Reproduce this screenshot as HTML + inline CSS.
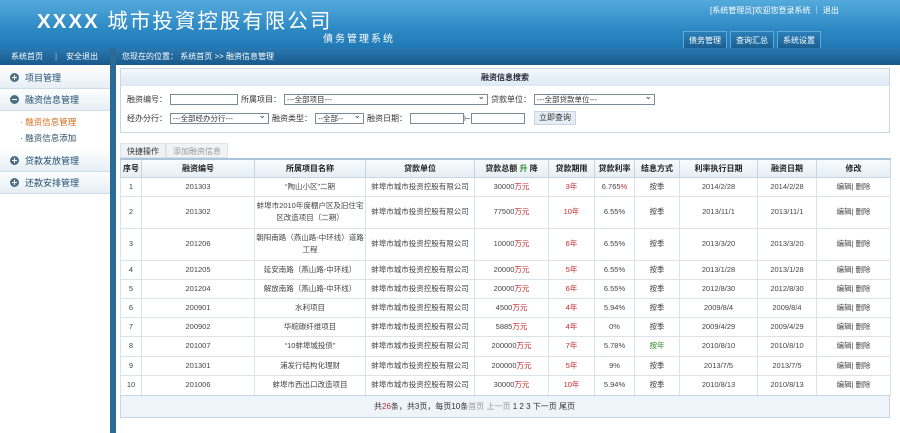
<!DOCTYPE html>
<html><head><meta charset="utf-8"><style>
*{margin:0;padding:0;box-sizing:border-box}
body{width:900px;height:433px;overflow:hidden;background:#fff;font-family:"Liberation Sans","Noto Sans CJK SC",sans-serif;font-size:8px;color:#333;position:relative}
.hd{position:absolute;left:0;top:0;width:900px;height:48px;background:linear-gradient(#55aadb,#2d89c4 60%,#2079b5)}
.title{position:absolute;left:37px;top:4px;color:#fff;font-size:20.5px;letter-spacing:2px}
.sub{position:absolute;left:323px;top:30px;color:#fff;font-size:10px;letter-spacing:2px}
.tr{position:absolute;left:710px;top:5px;color:#fff;font-size:8px}
.btns{position:absolute;left:683px;top:31px;display:flex;gap:3px}
.btns span{display:block;height:17px;line-height:17px;padding:0 5px;color:#fff;font-size:8px;background:linear-gradient(#2b7fb8,#1a5f92);border:1px solid #5fa8d8;border-bottom:none}
.nav{position:absolute;left:0;top:48px;width:900px;height:17px;background:linear-gradient(#2a78b0,#185a8c)}
.nav .l{position:absolute;left:0;top:0;width:110px;height:17px;color:#fff;font-size:8px;line-height:17px}
.nav .r{position:absolute;left:122px;top:0;line-height:17px;color:#fff;font-size:8px}
.side{position:absolute;left:0;top:67px;width:110px;height:366px;background:#fff}
.bar{position:absolute;left:110px;top:48px;width:6px;height:385px;background:#2a6a95}
.si{height:22px;line-height:22px;padding-left:25px;font-size:9px;color:#1f4a6e;background:linear-gradient(#fdfefe,#e6eff5);border-bottom:1px solid #cfdde8;position:relative}
.si:before{content:"";position:absolute;left:10px;top:6px;width:9px;height:9px;border-radius:50%;background:#4d6e87}
.si i{position:absolute;left:12px;top:10px;width:5px;height:1px;background:#fff}
.si b{position:absolute;left:14px;top:8px;width:1px;height:5px;background:#fff}
.sub2{height:16px;line-height:16px;padding-left:20px;font-size:8.5px;color:#2a4d6a}
.panel{position:absolute;left:120px;top:68px;width:770px;height:65px;border:1px solid #c5d6e4}
.pt{height:17px;background:linear-gradient(#f3f8fc,#dde9f3);text-align:center;line-height:17px;font-weight:bold;font-size:8px;color:#223}
.row{position:absolute;left:6px;font-size:8px;color:#333;display:flex;align-items:center;gap:3px;height:14px}
.in{border:1px solid #7a8a99;height:11px;background:#fff;font-size:7.5px;line-height:9px;padding-left:2px;position:relative}
.sel:after{content:"⌄";position:absolute;right:2px;top:-3px;font-size:9px}
.tabs{position:absolute;left:120px;top:143px;height:15px;display:flex}
.tabs span{display:block;padding:0 6px;line-height:15px;background:#eef2f5;border:1px solid #dde3e8;font-size:8px;color:#333}
.tabs span+span{color:#999;background:#f1f3f5}
table{position:absolute;left:120px;top:158px;width:770px;border-collapse:collapse;font-size:7.5px;text-align:center;table-layout:fixed}
th{height:18px;background:linear-gradient(#f8fbfd,#e5eef5);border:1px solid #c7d6e3;font-size:8px;color:#222;border-top:2px solid #aac4da}
td{border:1px solid #d8e3ec;color:#444;line-height:12px}
.red{color:#c0262c}.g{color:#2a8a2a}
.ft{position:absolute;left:120px;top:395px;width:770px;height:23px;background:#eef4fa;border:1px solid #c5d6e4;font-size:8px;line-height:22px;padding-left:253px;color:#333}
</style></head><body>
<div class="hd">
<div class="title"><b>XXXX</b> 城市投資控股有限公司</div>
<div class="sub">債务管理系统</div>
<div class="tr">[系统管理员]欢迎您登录系统 ｜ 退出</div>
<div class="btns"><span>债务管理</span><span>查询汇总</span><span>系统设置</span></div>
</div>
<div class="nav"><div class="l"><span style="position:absolute;left:11px">系统首页</span><span style="position:absolute;left:55px;opacity:.6">|</span><span style="position:absolute;left:66px">安全退出</span></div>
<div class="r">您现在的位置： 系统首页 &gt;&gt; 融资信息管理</div></div>
<div class="side">
<div class="si"><i></i><b></b>项目管理</div>
<div class="si"><i></i>融资信息管理</div>
<div class="sub2" style="color:#d56a1c;margin-top:3px">· 融资信息管理</div>
<div class="sub2">· 融资信息添加</div>
<div class="si" style="margin-top:4px"><i></i><b></b>贷款发放管理</div>
<div class="si"><i></i><b></b>还款安排管理</div>
</div>
<div class="bar"></div>
<div class="panel"><div class="pt">融资信息搜索</div>
<div class="row" style="top:23px">融资编号：<span class="in" style="width:68px"></span>所属项目：<span class="in sel" style="width:204px">---全部项目---</span>贷款单位：<span class="in sel" style="width:121px">---全部贷款单位---</span></div>
<div class="row" style="top:42px">经办分行：<span class="in sel" style="width:99px">---全部经办分行---</span>融资类型：<span class="in sel" style="width:49px">--全部--</span>融资日期：<span class="in" style="width:54px"></span><span style="margin:0 -3px">⊢</span><span class="in" style="width:54px"></span><span style="margin-left:6px;background:#e6eef5;border:1px solid #c8d5e0;padding:0 4px;line-height:12px">立即查询</span></div>
</div>
<div class="tabs"><span>快捷操作</span><span>添加融资信息</span></div>
<table>
<colgroup><col style="width:21px"><col style="width:113px"><col style="width:111px"><col style="width:109px"><col style="width:74px"><col style="width:46px"><col style="width:40px"><col style="width:45px"><col style="width:78px"><col style="width:59px"><col style="width:74px"></colgroup>
<tr><th>序号</th><th>融资编号</th><th>所属项目名称</th><th>贷款单位</th><th>贷款总额 <span class="g">升</span> 降</th><th>贷款期限</th><th>贷款利率</th><th>结息方式</th><th>利率执行日期</th><th>融资日期</th><th>修改</th></tr>
<tr style="height:19px"><td>1</td><td>201303</td><td>“陶山小区”二期</td><td>蚌埠市城市投资控股有限公司</td><td>30000<span class="red">万元</span></td><td class="red">3年</td><td>6.765<span class="red">%</span></td><td>按季</td><td>2014/2/28</td><td>2014/2/28</td><td>编辑| 删除</td></tr>
<tr style="height:32px"><td>2</td><td>201302</td><td>蚌埠市2010年度棚户区及旧住宅区改造项目（二期）</td><td>蚌埠市城市投资控股有限公司</td><td>77500<span class="red">万元</span></td><td class="red">10年</td><td>6.55%</td><td>按季</td><td>2013/11/1</td><td>2013/11/1</td><td>编辑| 删除</td></tr>
<tr style="height:32px"><td>3</td><td>201206</td><td>朝阳南路（燕山路-中环线）道路工程</td><td>蚌埠市城市投资控股有限公司</td><td>10000<span class="red">万元</span></td><td class="red">6年</td><td>6.55%</td><td>按季</td><td>2013/3/20</td><td>2013/3/20</td><td>编辑| 删除</td></tr>
<tr style="height:19px"><td>4</td><td>201205</td><td>延安南路（燕山路-中环线）</td><td>蚌埠市城市投资控股有限公司</td><td>20000<span class="red">万元</span></td><td class="red">5年</td><td>6.55%</td><td>按季</td><td>2013/1/28</td><td>2013/1/28</td><td>编辑| 删除</td></tr>
<tr style="height:19px"><td>5</td><td>201204</td><td>解放南路（燕山路-中环线）</td><td>蚌埠市城市投资控股有限公司</td><td>20000<span class="red">万元</span></td><td class="red">6年</td><td>6.55%</td><td>按季</td><td>2012/8/30</td><td>2012/8/30</td><td>编辑| 删除</td></tr>
<tr style="height:19px"><td>6</td><td>200901</td><td>水利项目</td><td>蚌埠市城市投资控股有限公司</td><td>4500<span class="red">万元</span></td><td class="red">4年</td><td>5.94%</td><td>按季</td><td>2009/8/4</td><td>2009/8/4</td><td>编辑| 删除</td></tr>
<tr style="height:19px"><td>7</td><td>200902</td><td>华皖碳纤维项目</td><td>蚌埠市城市投资控股有限公司</td><td>5885<span class="red">万元</span></td><td class="red">4年</td><td>0%</td><td>按季</td><td>2009/4/29</td><td>2009/4/29</td><td>编辑| 删除</td></tr>
<tr style="height:20px"><td>8</td><td>201007</td><td>“10蚌埠城投债”</td><td>蚌埠市城市投资控股有限公司</td><td>200000<span class="red">万元</span></td><td class="red">7年</td><td>5.78%</td><td class="g">按年</td><td>2010/8/10</td><td>2010/8/10</td><td>编辑| 删除</td></tr>
<tr style="height:19px"><td>9</td><td>201301</td><td>浦发行结构化理财</td><td>蚌埠市城市投资控股有限公司</td><td>200000<span class="red">万元</span></td><td class="red">5年</td><td>9%</td><td>按季</td><td>2013/7/5</td><td>2013/7/5</td><td>编辑| 删除</td></tr>
<tr style="height:20px"><td>10</td><td>201006</td><td>蚌埠市西出口改造项目</td><td>蚌埠市城市投资控股有限公司</td><td>30000<span class="red">万元</span></td><td class="red">10年</td><td>5.94%</td><td>按季</td><td>2010/8/13</td><td>2010/8/13</td><td>编辑| 删除</td></tr>
</table>
<div class="ft">共<span class="red">26</span>条，共3页，每页10条<span style="color:#999">首页 上一页</span> 1 2 3 下一页 尾页</div>
</body></html>
